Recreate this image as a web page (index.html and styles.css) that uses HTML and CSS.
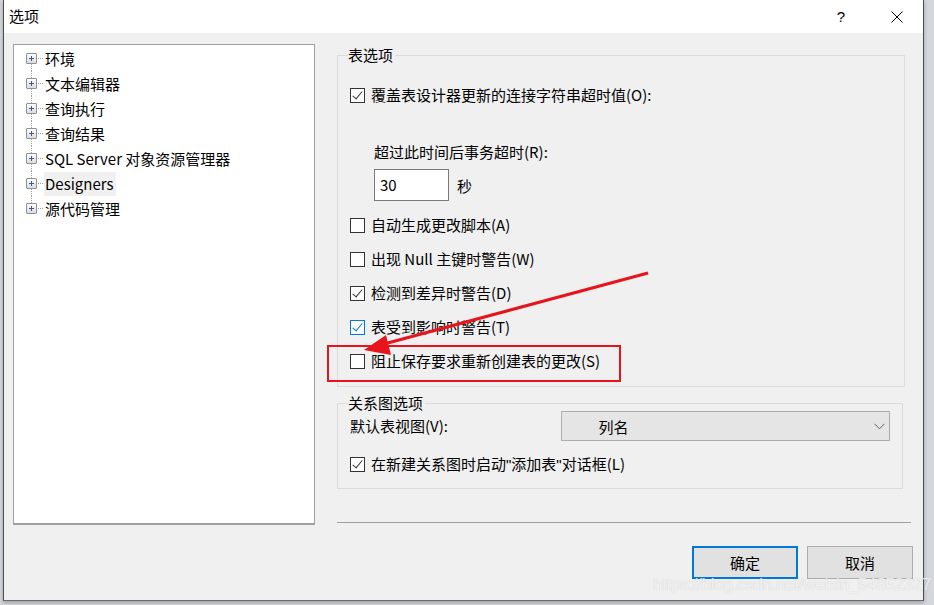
FILE: index.html
```html
<!DOCTYPE html>
<html lang="zh">
<head>
<meta charset="utf-8">
<title>选项</title>
<link rel="stylesheet" href="styles.css">
</head>
<body>
<div class="dialog">
  <div class="titlebar">
    <span class="title">选项</span>
    <span class="help">?</span>
    <span class="close">
      <svg width="12" height="12" viewBox="0 0 12 12"><path d="M0.5 0.5 L11.5 11.5 M11.5 0.5 L0.5 11.5" stroke="#000" stroke-width="1"/></svg>
    </span>
  </div>
  <div class="body">
    <div class="tree">
      <div class="node first"><span class="pm"></span><span class="dash"></span><span class="lbl">环境</span></div>
      <div class="node"><span class="pm"></span><span class="dash"></span><span class="lbl">文本编辑器</span></div>
      <div class="node"><span class="pm"></span><span class="dash"></span><span class="lbl">查询执行</span></div>
      <div class="node"><span class="pm"></span><span class="dash"></span><span class="lbl">查询结果</span></div>
      <div class="node"><span class="pm"></span><span class="dash"></span><span class="lbl">SQL Server 对象资源管理器</span></div>
      <div class="node"><span class="pm"></span><span class="dash"></span><span class="lbl sel">Designers</span></div>
      <div class="node last"><span class="pm"></span><span class="dash"></span><span class="lbl">源代码管理</span></div>
    </div>
    <div class="right">
      <fieldset class="group g1">
        <legend>表选项</legend>
        <div class="row r1"><span class="cb checked"></span><span>覆盖表设计器更新的连接字符串超时值(O):</span></div>
        <div class="sub-label">超过此时间后事务超时(R):</div>
        <div class="timeout"><span class="input">30</span><span class="unit">秒</span></div>
        <div class="row r3"><span class="cb"></span><span>自动生成更改脚本(A)</span></div>
        <div class="row"><span class="cb"></span><span>出现 Null 主键时警告(W)</span></div>
        <div class="row"><span class="cb checked"></span><span>检测到差异时警告(D)</span></div>
        <div class="row"><span class="cb checked blue"></span><span>表受到影响时警告(T)</span></div>
        <div class="row"><span class="cb"></span><span>阻止保存要求重新创建表的更改(S)</span></div>
      </fieldset>
      <fieldset class="group g2">
        <legend>关系图选项</legend>
        <div class="view-row">
          <span class="view-label">默认表视图(V):</span>
          <div class="select"><span>列名</span>
            <svg class="chev" width="11" height="7" viewBox="0 0 11 7"><path d="M0.5 0.8 L5.5 5.8 L10.5 0.8" fill="none" stroke="#606060" stroke-width="1"/></svg>
          </div>
        </div>
        <div class="row r9"><span class="cb checked"></span><span>在新建关系图时启动<span class="q">"</span>添加表<span class="q">"</span>对话框(L)</span></div>
      </fieldset>
      <div class="separator"></div>
      <div class="buttons">
        <button class="btn default">确定</button>
        <button class="btn">取消</button>
      </div>
    </div>
  </div>
  <div class="annot">
    <div class="redbox"></div>
    <svg class="arrow" width="934" height="605" viewBox="0 0 934 605">
      <line x1="648" y1="273" x2="384" y2="344" stroke="#e8141c" stroke-width="3"/>
      <polygon points="364,350 386,335 391,355" fill="#e8141c"/>
    </svg>
  </div>
  <div class="watermark">https://blog.csdn.net/weixin_54852327</div>
</div>
</body>
</html>
```

FILE: styles.css
```css
* { box-sizing: border-box; }
html, body { margin: 0; padding: 0; }
body {
  width: 934px;
  height: 605px;
  overflow: hidden;
  background: #d4d7db;
  font-family: "Noto Sans CJK SC", "Noto Sans", sans-serif;
  font-size: 15px;
  color: #000;
}
.dialog {
  position: relative;
  margin-left: 3px;
  width: 921px;
  height: 601px;
  background: #f0f0f0;
  border-left: 1px solid #4b4b4b;
  border-right: 1px solid #4b4b4b;
  border-bottom: 1px solid #6b6b6b;
  box-shadow: 0 2px 4px rgba(0,0,0,0.25);
}
.titlebar {
  height: 33px;
  background: #fff;
  display: flex;
  align-items: center;
  padding-left: 5px;
}
.title { font-size: 15px; line-height: 20px; margin-top: -1px; }
.help {
  margin-left: auto;
  font-family: "Liberation Sans", sans-serif;
  font-size: 15px;
  margin-right: 46px;
}
.close { width: 12px; height: 12px; margin-right: 20px; display: flex; }
.body {
  display: flex;
  padding-left: 9px;
  padding-top: 11px;
}
.tree {
  width: 302px;
  height: 481px;
  background: #fff;
  border: 1px solid #a0a0a0;
  border-bottom-width: 2px;
  padding-top: 1px;
  padding-left: 12px;
}
.node {
  position: relative;
  height: 25px;
  display: flex;
  align-items: center;
}
.node::before {
  content: "";
  position: absolute;
  left: 5px;
  top: 0;
  bottom: 0;
  border-left: 1px dotted #a0a0a0;
}
.node.first::before { top: 12px; }
.node.last::before { bottom: 12px; }
.pm {
  position: relative;
  z-index: 1;
  width: 11px;
  height: 11px;
  border: 1px solid #919191;
  border-radius: 1px;
  background: linear-gradient(#fdfdfd, #dcdcdc);
  flex: none;
}
.pm::before, .pm::after {
  content: "";
  position: absolute;
  background: #3d5691;
}
.pm::before { left: 2px; top: 4px; width: 5px; height: 1px; }
.pm::after { left: 4px; top: 2px; width: 1px; height: 5px; }
.dash {
  width: 5px;
  border-top: 1px dotted #a0a0a0;
  margin: 0 1px 0 1px;
}
.lbl {
  padding: 0 3px 0 1px;
  line-height: 24px;
  white-space: nowrap;
}
.lbl.sel { background: #f0f0f0; }
.right {
  margin-left: 22px;
  width: 576px;
  display: flex;
  flex-direction: column;
}
.group {
  margin: 0;
  padding: 0 12px;
  border: 1px solid #dcdcdc;
  min-width: 0;
}
.group legend {
  padding: 0 2px 0 0;
  margin-left: -2px;
  line-height: 18px;
  font-size: 15px;
}
.g1 {
  margin-top: 2px;
  width: 568px;
  height: 341px;
}
.row {
  display: flex;
  align-items: center;
  height: 20px;
  line-height: 20px;
  margin-top: 14px;
  white-space: nowrap;
}
.row.r1 { margin-top: 21px; }
.row.r3 { margin-top: 14px; }
.cb {
  position: relative;
  width: 15px;
  height: 15px;
  border: 1px solid #333;
  background: #fff;
  margin-right: 6px;
  flex: none;
}
.cb.checked::after {
  content: "";
  position: absolute;
  left: 4px;
  top: 0px;
  width: 4px;
  height: 9px;
  border-right: 1.5px solid #333;
  border-bottom: 1.5px solid #333;
  transform: rotate(40deg);
}
.cb.blue { border-color: #0078d7; }
.cb.blue::after { border-color: #0078d7; }
.q { font-family: "Liberation Sans", sans-serif; }
.sub-label {
  margin-top: 37px;
  margin-left: 24px;
  line-height: 20px;
  height: 20px;
}
.timeout {
  margin-top: 7px;
  margin-left: 24px;
  display: flex;
  align-items: center;
  height: 32px;
}
.input {
  width: 75px;
  height: 32px;
  border: 1px solid #7a7a7a;
  background: #fff;
  line-height: 30px;
  padding-left: 5px;
}
.unit { margin-left: 8px; }
.g2 {
  margin-top: 7px;
  width: 566px;
  height: 95px;
}
.view-row {
  display: flex;
  align-items: center;
  height: 30px;
  margin-top: -1px;
}
.view-label { width: 211px; line-height: 20px; }
.select {
  width: 330px;
  height: 30px;
  background: #e5e5e5;
  border: 1px solid #adadad;
  display: flex;
  align-items: center;
  padding-left: 37px;
  padding-right: 4px;
}
.chev { margin-left: auto; }
.row.r9 { margin-top: 13px; }
.separator {
  margin-top: 33px;
  width: 574px;
  height: 1px;
  background: #a0a0a0;
}
.buttons {
  margin-top: 23px;
  display: flex;
  justify-content: flex-end;
  gap: 9px;
  width: 576px;
}
.btn {
  width: 106px;
  height: 33px;
  background: #e1e1e1;
  border: 1px solid #adadad;
  font-family: "Noto Sans CJK SC", sans-serif;
  font-size: 15px;
  color: #000;
  padding: 0;
}
.btn.default { border: 2px solid #0078d7; }
.annot {
  position: absolute;
  left: -4px;
  top: 0;
  width: 934px;
  height: 605px;
  pointer-events: none;
}
.redbox {
  position: absolute;
  left: 327px;
  top: 345px;
  width: 294px;
  height: 37px;
  border: 2px solid #e8141c;
}
.arrow { position: absolute; left: 0; top: 0; }
.watermark {
  position: absolute;
  left: 649px;
  top: 575px;
  font-family: "Liberation Sans", sans-serif;
  font-size: 17px;
  color: rgba(255,255,255,0.75);
  text-shadow: 0 0 1px rgba(150,150,150,0.5);
  white-space: nowrap;
  letter-spacing: -0.3px;
}
```
